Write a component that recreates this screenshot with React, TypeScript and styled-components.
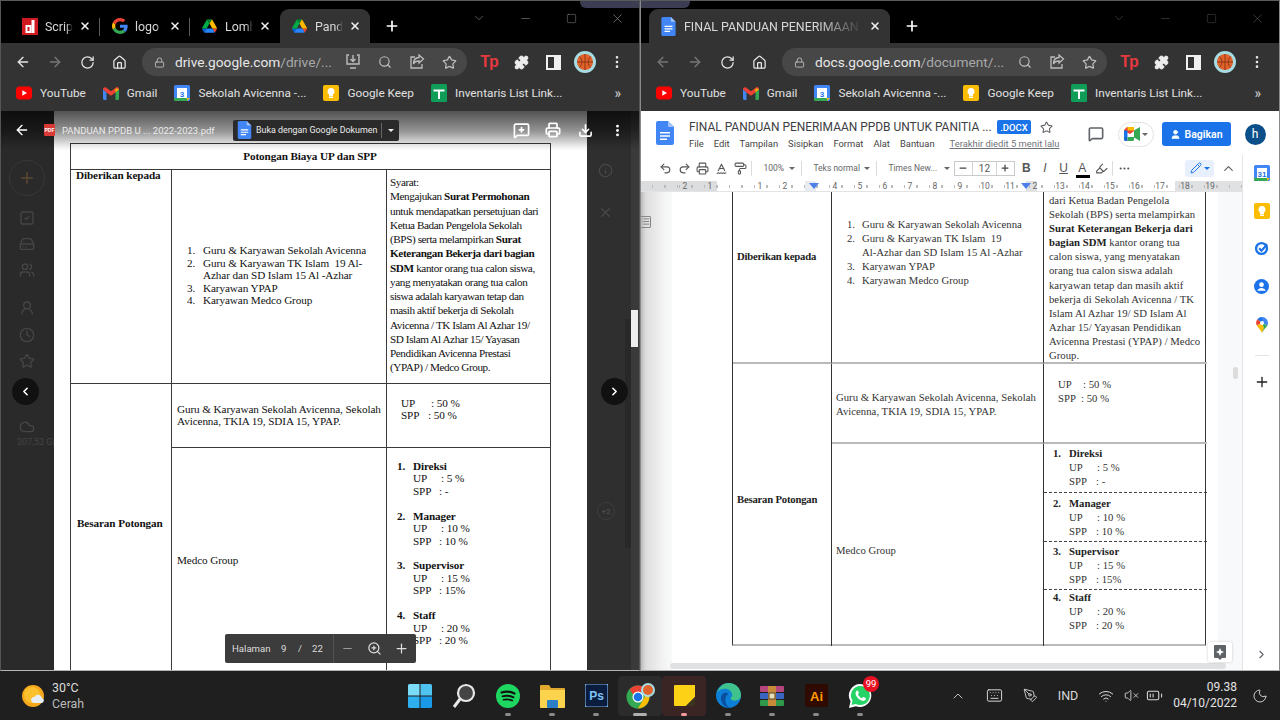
import React from 'react';
import styled, { createGlobalStyle } from 'styled-components';
import {
  ArrowLeft, ArrowRight, RotateCw, Home, Lock, Search, Star, Puzzle, X, Plus, Minus, Square, MoreVertical,
  ChevronDown, ChevronUp, ChevronRight, ChevronLeft, MessageSquarePlus, Printer, Download, Info, Undo2, Redo2,
  SpellCheck2, PaintRoller, Pencil, Highlighter, Ellipsis, MessageSquare, User, Users, Clock,
  Cloud, Keyboard, PenTool, Wifi, VolumeX, BatteryMedium, Moon, List, ZoomIn, HardDrive, UserRound, SquareCheck,
} from 'lucide-react';

const Global = createGlobalStyle`
  html, body { margin: 0; padding: 0; background: #1f1f1f; overflow: hidden; }
  * { box-sizing: border-box; }
`;

const UI = `Roboto, "Noto Sans", sans-serif`;
const SERIF = `"Liberation Serif", "Times New Roman", serif`;

const Desktop = styled.div`
  width: 1280px; height: 720px; display: flex; flex-direction: column; position: relative; overflow: hidden;
  background: #1f1f1f; font-family: ${UI};
`;
const WallpaperPeek = styled.div`
  position: absolute; left: 580px; top: 0; width: 110px; height: 8px; background: #3c3c52; border-radius: 0 0 6px 6px; z-index: 5;
`;
const Windows = styled.div`display: flex; height: 671px;`;
const Win = styled.section<{ $edge: string }>`
  width: 640px; height: 671px; display: flex; flex-direction: column; position: relative; overflow: hidden; background: #333;
  &::after {
    content: ''; position: absolute; inset: 0; pointer-events: none; z-index: 6;
    border: 1px solid ${(p) => p.$edge}; border-bottom-color: #b4b4b4; border-top-color: #5a5a5a;
  }
`;

/* ---------- tab strip ---------- */
const TabStrip = styled.div<{ $pad: number }>`height: 43px; background: #000; display: flex; align-items: flex-end; padding-left: ${(p) => p.$pad}px; position: relative;`;
const Tab = styled.div<{ $w: number; $active?: boolean; $sep?: boolean }>`
  width: ${(p) => p.$w}px; height: 34px; display: flex; align-items: center; padding: 0 9px 0 11px; color: #ddd; position: relative;
  background: ${(p) => (p.$active ? '#333' : 'transparent')}; border-radius: 9px 9px 0 0; flex: none;
  ${(p) => (p.$sep ? `&::after { content: ''; position: absolute; right: 0; top: 9px; height: 18px; width: 1px; background: #5a5a5a; }` : '')}
`;
const TabFav = styled.span`width: 17px; height: 17px; display: flex; align-items: center; justify-content: center; flex: none;`;
const TabTitle = styled.span`
  flex: 1; margin-left: 7px; font-size: 12.4px; color: #d8d8d8; white-space: nowrap; overflow: hidden;
  -webkit-mask-image: linear-gradient(to right, #000 75%, transparent 100%);
`;
const TabClose = styled.span`display: flex; color: #f4f4f4; margin-left: 6px; flex: none;`;
const NewTab = styled.span`display: flex; color: #fff; margin: 13px 0 4px 14px; align-self: center;`;
const Caption = styled.div<{ $dim?: boolean }>`position: absolute; right: 0; top: 6px; display: flex; color: ${(p) => (p.$dim ? '#555' : '#9a9a9a')};`;
const CaptionBtn = styled.span`width: 46px; height: 24px; display: flex; align-items: center; justify-content: center;`;

/* ---------- chrome toolbar ---------- */
const ChromeBar = styled.div`height: 38px; background: #333; display: flex; align-items: center; padding-left: 7px;`;
const Slot = styled.span<{ $dim?: boolean }>`
  width: 32px; height: 32px; display: flex; align-items: center; justify-content: center; flex: none; color: ${(p) => (p.$dim ? '#777' : '#e6e6e6')};
`;
const Omni = styled.div`
  width: 325px; height: 28px; margin: 0 6px 0 7px; background: #474747; border-radius: 14px; display: flex; align-items: center; padding: 0 2px 0 12px; flex: none;
`;
const LockBox = styled.span`display: flex; color: #bbb; width: 21px; flex: none;`;
const Url = styled.div`flex: 1; min-width: 0; font-size: 13.7px; color: #a9a9a9; white-space: nowrap; b { font-weight: 400; color: #e8e8e8; }`;
const OmniIcon = styled(Slot)`color: #bdbdbd;`;
const TpMark = styled.span`font-family: "Liberation Sans", sans-serif; font-weight: 700; font-size: 16px; color: #e5393f; letter-spacing: -1px;`;
const AvatarBall = styled.span`width: 22px; height: 22px; border-radius: 50%; background: #a6dde2; display: flex; align-items: center; justify-content: center;`;

/* ---------- bookmarks ---------- */
const BookBar = styled.div`height: 30px; background: #333; display: flex; align-items: center; padding: 0 0 6px 16px; gap: 17px;`;
const Book = styled.span`display: flex; align-items: center; gap: 8px; font-size: 11.8px; color: #e0e0e0; white-space: nowrap;`;
const BookMore = styled.span`margin-left: auto; margin-right: 19px; color: #d0d0d0; font-size: 14px;`;

/* ---------- pdf viewer ---------- */
const Viewer = styled.div`height: 560px; display: flex; position: relative; overflow: hidden; background: #2b2b2b;`;
const DriveSide = styled.aside`width: 54px; flex: none; background: #2a2a2a; display: flex; flex-direction: column; align-items: center; color: #464646; padding-top: 49px; position: relative; overflow: hidden;`;
const SideCircle = styled.span`width: 36px; height: 36px; border-radius: 50%; border: 1px solid #383838; display: flex; align-items: center; justify-content: center; margin-bottom: 14px;`;
const SideIco = styled.span<{ $mb: number }>`display: flex; height: 16px; margin-bottom: ${(p) => p.$mb}px;`;
const Quota = styled.span`font-size: 9px; color: #444; white-space: nowrap; margin-top: 2px; align-self: flex-start; margin-left: 17px;`;
const Sheet = styled.div`width: 533px; flex: none; background: #fff; padding: 32px 0 0 16px; overflow: hidden;`;
const RightRail = styled.aside`flex: 1; background: #2f2f2f; display: flex; flex-direction: column; align-items: flex-start; padding: 52px 0 0 11px; color: #484848; gap: 27px; position: relative;`;
const RailBadge = styled.span`width: 18px; height: 18px; border-radius: 50%; border: 1px solid #3d3d3d; margin: 255px 0 0 -1px; font-size: 8px; display: flex; align-items: center; justify-content: center; color: #4a4a4a; font-weight: 700;`;
const RailTrack = styled.span`position: absolute; right: 1px; top: 0; bottom: 0; width: 8px; background: #3a3a3a;`;
const RailShade = styled.span`position: absolute; right: 9px; top: 208px; height: 229px; width: 6px; background: #282828;`;
const PdfHead = styled.div`
  position: absolute; left: 0; top: 0; right: 0; height: 40px; display: flex; align-items: center; color: #fff; padding-left: 14px; padding-bottom: 2px;
  background: linear-gradient(to bottom, rgba(0,0,0,.68), rgba(0,0,0,.42) 50%, rgba(0,0,0,.06) 90%, rgba(0,0,0,0));
`;
const PdfBadge = styled.span`
  width: 11px; height: 12px; margin-left: 14px; background: #d93a36; color: #fff; font: 700 5px "Liberation Sans", sans-serif; border-radius: 1px;
  display: flex; align-items: center; justify-content: center; flex: none;
`;
const PdfName = styled.span`margin-left: 7px; width: 171px; font-size: 9.5px; color: #ececec; white-space: nowrap; flex: none;`;
const OpenWith = styled.div`height: 21px; width: 166px; background: #2a2a2a; display: flex; align-items: center; padding-left: 4px; border-radius: 2px; flex: none;`;
const OpenText = styled.span`margin-left: 4px; font-size: 8.9px; color: #eaeaea; white-space: nowrap; width: 125px; flex: none;`;
const OpenSep = styled.span`width: 1px; height: 15px; background: #666; margin-right: 4px; flex: none;`;
const OpenCaret = styled.span`width: 0; height: 0; border: 3.5px solid transparent; border-top-color: #eee; margin: 4px 0 0 2px;`;
const HeadTools = styled.div`margin-left: auto; display: flex; margin-right: 7px;`;
const HeadSlot = styled(Slot)`color: #fff;`;
const NavDot = styled.span<{ $side: 'l' | 'r' }>`
  position: absolute; top: 267px; ${(p) => (p.$side === 'l' ? 'left: 12px;' : 'right: 12px;')}
  width: 27px; height: 27px; border-radius: 50%; background: #111; display: flex; align-items: center; justify-content: center; color: #fff;
`;
const ScrollThumb = styled.span`position: absolute; right: 2px; top: 199px; width: 7px; height: 37px; background: #eee;`;
const ZoomBar = styled.div`
  position: absolute; left: 225px; top: 523px; width: 191px; height: 29px; background: #3c3c3c; border-radius: 2px; display: flex; align-items: center; color: #ddd;
`;
const ZoomText = styled.span`
  font-size: 9.6px; color: #dcdcdc; width: 108px; flex: none; display: flex; padding-left: 7px; white-space: nowrap;
  span:nth-child(1) { width: 49px; } span:nth-child(2) { width: 17px; } span:nth-child(3) { width: 14px; }
`;
const ZoomSep = styled.span`width: 1px; height: 29px; background: #515151; flex: none;`;
const ZoomBtn = styled.span`width: 27px; display: flex; justify-content: center; flex: none;`;

const PdfTable = styled.div`
  width: 481px; height: 530px; display: grid; grid-template-columns: 101px 215px 164px; grid-template-rows: 26px 214px 64px 226px;
  border: 1px solid #3a3a3a; font-family: ${SERIF}; font-size: 11.2px; line-height: 12.4px; color: #111; letter-spacing: -0.1px;
  b { letter-spacing: -0.12px; }
`;
const PdfCell = styled.div<{ $rows?: string; $span?: boolean; $right?: boolean; $bottom?: boolean; $pt?: number; $pl?: number; $center?: boolean; $bold?: boolean; $pb?: number }>`
  border-right: ${(p) => (p.$right ? '1px solid #3a3a3a' : 'none')}; border-bottom: ${(p) => (p.$bottom ? '1px solid #3a3a3a' : 'none')};
  ${(p) => (p.$rows ? `grid-row: ${p.$rows};` : '')} ${(p) => (p.$span ? 'grid-column: 1 / -1;' : '')}
  padding: ${(p) => p.$pt ?? 0}px 0 ${(p) => p.$pb ?? 0}px ${(p) => p.$pl ?? 0}px; font-weight: ${(p) => (p.$bold ? 700 : 400)};
  ${(p) => (p.$bold ? 'line-height: 11px;' : '')}
  ${(p) => (p.$center ? 'display: flex; flex-direction: column; justify-content: center;' : '')}
  white-space: pre; overflow: hidden;
`;
const PdfHeadText = styled.div`text-align: center; font-weight: 700; line-height: 25px; padding-right: 2px;`;
const SyaratLine = styled.div`line-height: 14.25px; letter-spacing: -0.42px; b { letter-spacing: -0.36px; }`;
const Li = styled.div`display: flex;`;
const LiNum = styled.span<{ $w: number }>`width: ${(p) => p.$w}px; flex: none;`;
const Group = styled.div<{ $mb?: number }>`margin-bottom: ${(p) => p.$mb ?? 0}px;`;

/* ---------- docs ---------- */
const DocHeader = styled.header`height: 44px; background: #fff; display: flex; padding-left: 16px;`;
const DocLogo = styled.span`margin: 10px 15px 0 0; display: flex; flex: none;`;
const DocInfo = styled.div`padding-top: 8px; display: flex; flex-direction: column; gap: 2px; width: 372px; flex: none;`;
const TitleRow = styled.div`display: flex; align-items: center; height: 16px;`;
const DocTitle = styled.span`font-size: 11.95px; color: #3c4043; white-space: nowrap; width: 308px; flex: none;`;
const Badge = styled.span`width: 34px; height: 14px; background: #1a73e8; border-radius: 2px; color: #fff; font-size: 9.5px; display: flex; align-items: center; justify-content: center; font-weight: 500; flex: none;`;
const TitleStar = styled.span`margin-left: 9px; color: #5f6368; display: flex;`;
const MenuRow = styled.div`display: flex; gap: 10px; font-size: 9.4px; line-height: 14px; color: #444; white-space: nowrap;`;
const Edited = styled.span`margin-left: 5px; color: #6f7378; text-decoration: underline;`;
const DocActions = styled.div`margin-left: auto; display: flex; align-items: center; padding: 2px 14.5px 0 0; height: 44px;`;
const CommentBtn = styled.span`color: #5f6368; display: flex; margin-right: 14px;`;
const MeetPill = styled.span`width: 36px; height: 25px; border-radius: 13px; border: 1px solid #e3e3e3; display: flex; align-items: center; justify-content: center; gap: 2px; margin-right: 8px; flex: none;`;
const Share = styled.span`width: 69px; height: 24px; background: #1a73e8; border-radius: 3px; color: #fff; display: flex; align-items: center; justify-content: center; gap: 3px; font-size: 10.5px; font-weight: 600; margin-right: 13.5px; flex: none;`;
const ProfileH = styled.span`width: 21px; height: 21px; border-radius: 50%; background: #0b4f8a; color: #fff; font-size: 12px; display: flex; align-items: center; justify-content: center; flex: none;`;

const DocBelow = styled.div`flex: 1; display: flex; min-height: 0; position: relative;`;
const DocMain = styled.div`width: 602px; display: flex; flex-direction: column; flex: none;`;
const DocTools = styled.div`height: 26px; background: #fff; display: flex; align-items: center; padding-left: 16px; color: #5f6368; font-size: 8.5px;`;
const TbSlot = styled.span`width: 18.7px; display: flex; justify-content: center; align-items: center; flex: none; color: #555;`;
const TbSep = styled.span`width: 1px; height: 15px; background: #dadce0; margin: 0 2px; flex: none;`;
const TbSelect = styled.span<{ $w: number }>`width: ${(p) => p.$w}px; padding: 0 4px 0 9px; display: flex; justify-content: space-between; align-items: center; flex: none; white-space: nowrap; color: #666;`;
const Caret = styled.span`width: 0; height: 0; border: 3px solid transparent; border-top-color: #666; margin-top: 3px; flex: none;`;
const SizeBox = styled.span`width: 61px; height: 15px; border: 1px solid #c8cacd; display: flex; align-items: center; flex: none; margin-right: 2px; color: #444;`;
const SizeBtn = styled.span`width: 17px; display: flex; justify-content: center;`;
const SizeVal = styled.span`flex: 1; text-align: center; border: solid #d5d5d5; border-width: 0 1px; line-height: 13px; font-size: 10px; color: #555;`;
const Fmt = styled.span<{ $b?: boolean; $i?: boolean; $u?: boolean; $bar?: boolean }>`
  width: 18.7px; text-align: center; flex: none; font: ${(p) => (p.$i ? 'italic ' : '')}${(p) => (p.$b ? '700' : '400')} 12px "Liberation Sans", sans-serif; color: #555;
  text-decoration: ${(p) => (p.$u ? 'underline' : 'none')}; position: relative;
  ${(p) => (p.$bar ? `&::after { content: ''; position: absolute; left: 3px; right: 2px; bottom: -3px; height: 3px; background: #000; }` : '')}
`;
const PencilPill = styled.span`margin-left: auto; width: 29px; height: 17px; background: #e8f0fe; border-radius: 3px; display: flex; align-items: center; justify-content: center; gap: 2px; color: #1a73e8; flex: none;`;
const BlueCaret = styled(Caret)`border-top-color: #1a73e8;`;
const CollapseBtn = styled.span`width: 28px; display: flex; justify-content: center; color: #5f6368; flex: none;`;
const Ruler = styled.div`
  height: 11px; border-bottom: 1px solid #e3e3e3; display: flex; padding-left: 32.5px; position: relative; font-size: 8.5px; line-height: 10px; color: #666; flex: none;
  background: linear-gradient(to right, #dcdddf 0 77px, #fff 77px 165px, #e8ebf0 165px 176px, #fff 176px 386px, #e0e1e3 386px 397px, #fff 397px 535px, #e0e1e3 535px);
  &::before {
    content: ''; position: absolute; left: 0; right: 0; top: 4px; height: 3px;
    background: repeating-linear-gradient(to right, #bbb 0 1px, transparent 1px 12.5px); background-position: 39px 0;
  }
`;
const RulerNum = styled.span`width: 25px; text-align: center; flex: none; position: relative;`;
const RulerMark = styled.span<{ $x: number }>`position: absolute; left: ${(p) => p.$x}px; top: 2px; width: 0; height: 0; border: 5px solid transparent; border-top: 6px solid #4a80e8; border-bottom: 0;`;
const DocBody = styled.div`flex: 1; display: flex; min-height: 0; position: relative; background: #f8f9fa;`;
const Gutter = styled.div`width: 32px; flex: none; background: linear-gradient(to right, #b5b5b5 0, #dedede 6px, #f4f4f4 24px, #f8f9fa); padding: 19px 0 0 0; color: #666;`;
const OutlineBox = styled.span`display: inline-flex; border: 1px solid #888; border-radius: 1px; width: 11px; height: 12px; align-items: center; justify-content: center;`;
const Page = styled.div`width: 546px; flex: none; background: #fff; padding-left: 60px; overflow: hidden;`;
const DocTable = styled.div`
  width: 474px; height: 454px; display: grid; grid-template-columns: 99px 212px 163px; grid-template-rows: 172px 80px 202px;
  border-left: 1.5px solid #333; border-right: 1.5px solid #333; border-bottom: 2px solid #b9b9b9;
  font-family: ${SERIF}; font-size: 10.7px; line-height: 14.1px; color: #333; letter-spacing: 0.03px;
`;
const DocCell = styled.div<{ $rows?: string; $right?: boolean; $bottom?: boolean; $pt?: number; $pl?: number; $bold?: boolean }>`
  ${(p) => (p.$rows ? `grid-row: ${p.$rows};` : '')}
  border-right: ${(p) => (p.$right ? '1.5px solid #333' : 'none')}; border-bottom: ${(p) => (p.$bottom ? '2px solid #b9b9b9' : 'none')};
  padding: ${(p) => p.$pt ?? 0}px 0 0 ${(p) => p.$pl ?? 0}px; white-space: pre; overflow: hidden;
  ${(p) => (p.$bold ? 'font-weight: 700; letter-spacing: -0.2px; color: #222;' : '')}
`;
const Sub = styled.div<{ $h: number; $pt: number; $dash?: boolean }>`
  height: ${(p) => p.$h}px; padding: ${(p) => p.$pt}px 0 0 9px; border-bottom: ${(p) => (p.$dash ? '1px dashed #444' : 'none')};
`;
const Strong = styled.b`color: #222;`;
const VThumb = styled.span`position: absolute; right: 4px; top: 175px; width: 5px; height: 12px; background: #dcdcdc; border-radius: 3px;`;
const HScroll = styled.span`position: absolute; left: 30px; right: 16px; bottom: 2px; height: 6px; background: #dfe1e3; border-radius: 3px;`;
const Explore = styled.span`position: absolute; right: 10px; bottom: 9px; width: 24px; height: 20px; background: #fff; border-radius: 2px; box-shadow: 0 0 3px rgba(0,0,0,.2); display: flex; align-items: center; justify-content: center;`;
const SidePanel = styled.aside`width: 38px; flex: none; background: #fff; border-left: 1px solid #e3e5e8; display: flex; flex-direction: column; align-items: center; padding-top: 10px; position: relative;`;
const SideApp = styled.span`height: 38px; display: flex; justify-content: center;`;
const SideRule = styled.span`width: 14px; height: 1px; background: #e3e3e3; margin: 0 0 18px;`;
const SideChevron = styled.span`position: absolute; bottom: 10px; color: #5f6368; display: flex;`;

/* ---------- taskbar ---------- */
const Taskbar = styled.footer`height: 49px; display: flex; align-items: center; background: #1f1f1f; color: #e6e6e6;`;
const Weather = styled.div`width: 398px; flex: none; padding-left: 22px; display: flex; align-items: center;`;
const WeatherText = styled.div`margin-left: 6px; font-size: 12.4px; line-height: 16px; color: #ddd;`;
const WeatherSub = styled.div`color: #b9b9b9;`;
const TaskIcon = styled.span<{ $bg?: string; $dot?: string; $wide?: boolean }>`
  width: 44px; height: 40px; flex: none; display: flex; align-items: center; justify-content: center; position: relative; border-radius: 4px;
  background: ${(p) => p.$bg ?? 'transparent'};
  ${(p) => (p.$dot ? `&::after { content: ''; position: absolute; bottom: 0; left: 50%; transform: translateX(-50%); height: 3px; border-radius: 2px; width: ${p.$wide ? 14 : 6}px; background: ${p.$dot}; }` : '')}
`;
const WaBadge = styled.span`position: absolute; left: 25px; top: 0; width: 16px; height: 16px; background: #e81123; color: #fff; border-radius: 50%; font-size: 9.5px; display: flex; align-items: center; justify-content: center;`;
const Tray = styled.div`margin-left: 58px; display: flex; align-items: center; color: #d8d8d8;`;
const TraySlot = styled.span<{ $w: number }>`width: ${(p) => p.$w}px; display: flex; justify-content: center; align-items: center; flex: none; font-size: 12.5px; svg { flex: none; }`;
const Clock2 = styled.div`width: 67px; text-align: right; font-size: 12px; line-height: 15.5px; color: #e4e4e4; flex: none;`;

/* ---------- drawn icons ---------- */
const ScriptIco = () => (
  <svg width="16" height="17" viewBox="0 0 16 17"><rect width="16" height="17" fill="#d11a1f" /><rect x="9.5" y="2" width="3" height="13" fill="#fff" /><rect x="3.5" y="7" width="6" height="8" fill="#fff" /><rect x="5.5" y="9" width="2" height="4" fill="#d11a1f" /></svg>
);
const GoogleIco = () => (
  <svg width="16" height="16" viewBox="0 0 48 48">
    <path fill="#EA4335" d="M24 9.5c3.54 0 6.71 1.22 9.21 3.6l6.85-6.85C35.9 2.38 30.47 0 24 0 14.62 0 6.51 5.38 2.56 13.22l7.98 6.19C12.43 13.72 17.74 9.5 24 9.5z" />
    <path fill="#4285F4" d="M46.98 24.55c0-1.57-.15-3.09-.38-4.55H24v9.02h12.94c-.58 2.96-2.26 5.48-4.78 7.18l7.73 6c4.51-4.18 7.09-10.36 7.09-17.65z" />
    <path fill="#FBBC05" d="M10.53 28.59c-.48-1.45-.76-2.99-.76-4.59s.27-3.14.76-4.59l-7.98-6.19C.92 16.46 0 20.12 0 24c0 3.88.92 7.54 2.56 10.78l7.97-6.19z" />
    <path fill="#34A853" d="M24 48c6.48 0 11.93-2.13 15.89-5.81l-7.73-6c-2.15 1.45-4.92 2.3-8.16 2.3-6.26 0-11.57-4.22-13.47-9.91l-7.98 6.19C6.51 42.62 14.62 48 24 48z" />
  </svg>
);
const DriveIco = () => (
  <svg width="15" height="14" viewBox="0 0 87.3 78">
    <path d="m6.6 66.85 3.85 6.65c.8 1.4 1.95 2.5 3.3 3.3l13.75-23.8h-27.5c0 1.55.4 3.1 1.2 4.5z" fill="#0066da" />
    <path d="m43.65 25-13.75-23.8c-1.35.8-2.5 1.9-3.3 3.3l-25.4 44a9.06 9.06 0 0 0 -1.2 4.5h27.5z" fill="#00ac47" />
    <path d="m73.55 76.8c1.35-.8 2.5-1.9 3.3-3.3l1.6-2.75 7.65-13.25c.8-1.4 1.2-2.95 1.2-4.5h-27.502l5.852 11.5z" fill="#ea4335" />
    <path d="m43.65 25 13.75-23.8c-1.35-.8-2.9-1.2-4.5-1.2h-18.5c-1.6 0-3.15.45-4.5 1.2z" fill="#00832d" />
    <path d="m59.8 53h-32.3l-13.75 23.8c1.35.8 2.9 1.2 4.5 1.2h50.8c1.6 0 3.15-.45 4.5-1.2z" fill="#2684fc" />
    <path d="m73.4 26.5-12.7-22c-.8-1.4-1.95-2.5-3.3-3.3l-13.75 23.8 16.15 28h27.45c0-1.55-.4-3.1-1.2-4.5z" fill="#ffba00" />
  </svg>
);
const DocIco = ({ w = 15, h = 19 }: { w?: number; h?: number }) => (
  <svg width={w} height={h} viewBox="0 0 18 24">
    <path d="M2 0h10l6 6v16a2 2 0 0 1-2 2H2a2 2 0 0 1-2-2V2a2 2 0 0 1 2-2z" fill="#4285f4" />
    <path d="M12 0l6 6h-5a1 1 0 0 1-1-1z" fill="#a1c2fa" />
    <path d="M4 11h10v1.6H4zM4 14.2h10v1.6H4zM4 17.4h7V19H4z" fill="#fff" />
  </svg>
);
const YtIco = () => (
  <svg width="16" height="16" viewBox="0 0 16 16"><rect y="1.5" width="16" height="13" rx="3.5" fill="#f00" /><path d="M6.3 5.2 11 8l-4.700 2.800z" fill="#fff" /></svg>
);
const GmailIco = () => (
  <svg width="16" height="13" viewBox="0 0 16 13">
    <path d="M0 2v9.500c0 .8.700 1.500 1.500 1.500H3.500V5.500z" fill="#4285f4" />
    <path d="M12.500 5.500V13h2c.8 0 1.500-.7 1.500-1.500V2z" fill="#34a853" />
    <path d="M0 2c0-1.500 1.800-2.400 3-1.500L8 4.300l5-3.800c1.200-.9 3-.1 3 1.500l-3.500 3.500L8 8.800 3.500 5.500z" fill="#ea4335" />
    <path d="M12.500 1.500 16 2l-3.500 3.500z" fill="#fbbc05" />
  </svg>
);
const CalIco = ({ n = '3', size = 16 }: { n?: string; size?: number }) => (
  <svg width={size} height={size} viewBox="0 0 16 16">
    <rect width="16" height="16" rx="1.500" fill="#4285f4" /><rect x="3" y="3" width="10" height="10" fill="#fff" />
    <path d="M0 13h13v3H1.500A1.500 1.500 0 0 1 0 14.500z" fill="#34a853" /><path d="M13 13h3l-3 3z" fill="#fbbc04" /><path d="M13 3h3v10h-3z" fill="#4285f4" />
    <text x="8" y="11.500" fontSize="8" textAnchor="middle" fontFamily="Liberation Sans" fill="#1a73e8" fontWeight="700">{n}</text>
  </svg>
);
const KeepIco = ({ size = 16 }: { size?: number }) => (
  <svg width={size} height={size} viewBox="0 0 16 16"><rect width="16" height="16" rx="2" fill="#fbbc04" /><path d="M8 3a3.500 3.500 0 0 0-2 6.400V11h4V9.400A3.500 3.500 0 0 0 8 3z" fill="#fff" /><rect x="6" y="11.500" width="4" height="1.500" fill="#fff" /></svg>
);
const SheetIco = () => (
  <svg width="16" height="18" viewBox="0 0 16 18"><rect width="16" height="18" rx="1.500" fill="#0f9d58" /><path d="M2.500 5.500h11v2h-4.500V15H7V7.500H2.500z" fill="#fff" /></svg>
);
const Ball = ({ size = 16 }: { size?: number }) => (
  <svg width={size} height={size} viewBox="0 0 16 16"><circle cx="8" cy="8" r="8" fill="#e2622b" /><path d="M0 8h16M8 0v16M2.500 2.500c3 3 3 8 0 11M13.500 2.500c-3 3-3 8 0 11" stroke="#7a2e10" strokeWidth=".8" fill="none" /></svg>
);
const ChromeShare = () => (
  <svg width="16" height="16" viewBox="0 0 16 16" fill="none" stroke="currentColor" strokeWidth="1.300"><path d="M6 3H2v11h11v-4" /><path d="M14.500 5 10 1v2.500C6.500 3.500 4.500 6 4.500 10c1-2.500 3-3 5.500-3v2z" /></svg>
);
const SidePanelIco = () => (
  <svg width="15" height="15" viewBox="0 0 15 15"><rect x="1" y="1" width="13" height="13" fill="none" stroke="#f0f0f0" strokeWidth="2" /><rect x="8" y="1" width="6" height="13" fill="#f0f0f0" /></svg>
);
const OmniDownload = () => (
  <svg width="16" height="16" viewBox="0 0 16 16" fill="none" stroke="currentColor" strokeWidth="1.400"><path d="M4 1H2v9h12V1h-2M8 1v6M5.500 5 8 7.500 10.500 5M5 14h6" /></svg>
);
const MeetIco = () => (
  <svg width="16" height="14" viewBox="0 0 16 14">
    <path d="M3 0h7v4L6 7 0 4V3z" fill="#ea4335" /><path d="M0 3.500h3.500V10H0z" fill="#1a73e8" /><path d="M0 10h3.500v4H1.500A1.500 1.500 0 0 1 0 12.500z" fill="#1967d2" />
    <path d="M3.500 10H10v2.500c0 .8-.7 1.500-1.500 1.500h-5z" fill="#34a853" /><path d="M3.500 0H10v3.500H3.500z" fill="#fbbc04" /><path d="M10 3.500 16 0v14l-6-3.500z" fill="#34a853" />
  </svg>
);
const TasksIco = () => (
  <svg width="15" height="15" viewBox="0 0 16 16" fill="none"><circle cx="8" cy="8" r="5.800" stroke="#1a73e8" strokeWidth="2.500" /><path d="M5.500 7.800 8 10.300 14 3.500" stroke="#1a73e8" strokeWidth="2.200" /></svg>
);
const ContactsIco = () => (
  <svg width="15" height="15" viewBox="0 0 16 16"><circle cx="8" cy="8" r="8" fill="#1a73e8" /><circle cx="8" cy="6" r="2.500" fill="#fff" /><path d="M3.500 12.500c.8-2 2.500-3 4.500-3s3.700 1 4.500 3z" fill="#fff" /></svg>
);
const MapsIco = () => (
  <svg width="12" height="16" viewBox="0 0 12 16">
    <path d="M6 0a6 6 0 0 0-4.600 2.200L6 6z" fill="#1a73e8" /><path d="M6 0a6 6 0 0 1 5.400 8.500L6 6z" fill="#4285f4" /><path d="M1.400 2.200A6 6 0 0 0 .8 8.500L6 6z" fill="#ea4335" />
    <path d="M.8 8.500C2 11 5 13 6 16l2-5-2-5z" fill="#fbbc04" /><path d="M11.400 8.500 6 6l2 5c-1 2-1.500 3-2 5 1-3 4-5 5.400-7.500z" fill="#34a853" /><circle cx="6" cy="6" r="2" fill="#fff" />
  </svg>
);
const WeatherIco = () => (
  <svg width="24" height="26" viewBox="0 0 24 26"><circle cx="11" cy="13" r="11" fill="#f6a81c" /><circle cx="10" cy="12" r="8" fill="#fbc02d" /><path d="M12 20a3 3 0 0 1 .5-6 4 4 0 0 1 7.500 1 2.600 2.600 0 0 1 0 5z" fill="#e8eef5" /></svg>
);
const Win11 = () => (
  <svg width="24" height="24" viewBox="0 0 24 24">
    <path d="M1.500 0h10v11.500H0V1.500A1.500 1.500 0 0 1 1.500 0z" fill="#7bdcf7" /><path d="M12.500 0h10A1.500 1.500 0 0 1 24 1.500v10H12.500z" fill="#4fc3f0" />
    <path d="M0 12.500h11.500V24h-10A1.500 1.500 0 0 1 0 22.500z" fill="#2fb0ee" /><path d="M12.500 12.500H24v10a1.500 1.500 0 0 1-1.500 1.500h-10z" fill="#1a9ae6" />
  </svg>
);
const SearchIco = () => (
  <svg width="24" height="26" viewBox="0 0 24 26" fill="none"><circle cx="14" cy="10" r="8" fill="#444" stroke="#e8e8e8" strokeWidth="2.200" /><path d="M8 16 2 24" stroke="#e8e8e8" strokeWidth="3" /></svg>
);
const SpotifyIco = () => (
  <svg width="24" height="24" viewBox="0 0 24 24" fill="none"><circle cx="12" cy="12" r="12" fill="#1ed760" /><g stroke="#111" strokeLinecap="round"><path d="M5.500 8.500c4-1.200 9-1 13 1" strokeWidth="2.200" /><path d="M6.500 12.300c3.500-1 7.500-.7 11 1" strokeWidth="1.900" /><path d="M7.500 15.800c3-.8 6-.5 8.800.8" strokeWidth="1.600" /></g></svg>
);
const FolderIco = () => (
  <svg width="25" height="24" viewBox="0 0 25 24"><path d="M0 2a1 1 0 0 1 1-1h8l2 3h13a1 1 0 0 1 1 1v3H0z" fill="#e0a82e" /><path d="M0 6h25v17a1 1 0 0 1-1 1H1a1 1 0 0 1-1-1z" fill="#fcd34d" /><rect x="7" y="16" width="11" height="8" rx="1" fill="#2b7fc7" /></svg>
);
const PsIco = () => (
  <svg width="23" height="23" viewBox="0 0 23 23"><rect width="23" height="23" rx="2" fill="#0b1d3e" stroke="#7fb4ea" strokeWidth="1.200" /><text x="11.500" y="16" textAnchor="middle" fontSize="12" fontWeight="700" fontFamily="Liberation Sans" fill="#7fc3f8">Ps</text></svg>
);
const ChromeIco = () => (
  <svg width="30" height="28" viewBox="0 0 30 28">
    <circle cx="13" cy="15" r="11.500" fill="#34a853" /><path d="M13 3.500A11.500 11.500 0 0 1 23.300 10H13a5.500 5.500 0 0 0-4.800 2.700L4.500 7.300A11.500 11.500 0 0 1 13 3.500z" fill="#ea4335" />
    <path d="M23.300 10A11.500 11.500 0 0 1 13 26.500l5-8.700a5.500 5.500 0 0 0 0-7.800z" fill="#fbbc04" /><circle cx="13" cy="15" r="5.500" fill="#fff" /><circle cx="13" cy="15" r="4.300" fill="#1a73e8" />
    <circle cx="23" cy="8" r="7" fill="#a6dde2" /><circle cx="23" cy="8" r="5" fill="#e2622b" />
  </svg>
);
const StickyIco = () => (
  <svg width="21" height="21" viewBox="0 0 21 21"><path d="M1 0h20v12l-9 9H1a1 1 0 0 1-1-1V1a1 1 0 0 1 1-1z" fill="#fcd116" /><path d="M21 12v8a1 1 0 0 1-1 1h-8z" fill="#3b3420" /></svg>
);
const EdgeIco = () => (
  <svg width="25" height="25" viewBox="0 0 24 24">
    <circle cx="12" cy="12" r="12" fill="#0d7fd6" /><path d="M1 9C3 3 8 0 12 0c7 0 12 5 12 12 0 3-3 5-6 5-2.500 0-4-1-4-2.500 0-1 1.500-1 1.500-3C15.500 8 12 5.500 9 5.500 5 5.500 2 7 1 9z" fill="#3fc28c" />
    <path d="M10 9c-4 0-6 4-5 8s5 7 9 7c-3-1-5-4-5-7.500 0-3 1-5 3-6z" fill="#0a4f9e" />
  </svg>
);
const RarIco = () => (
  <svg width="24" height="20" viewBox="0 0 24 20">
    <rect y="0" width="24" height="6" rx="1" fill="#b5467e" /><rect y="7" width="24" height="6" rx="1" fill="#3a66c2" /><rect y="14" width="24" height="6" rx="1" fill="#2f9a4a" />
    <rect x="8" y="0" width="8" height="20" fill="#c78a3a" /><rect x="9" y="7" width="6" height="6" fill="#e9dcb8" stroke="#5a4320" />
  </svg>
);
const AiIco = () => (
  <svg width="23" height="23" viewBox="0 0 23 23"><rect width="23" height="23" rx="2" fill="#2e0a00" /><text x="11.500" y="16.500" textAnchor="middle" fontSize="13" fontWeight="700" fontFamily="Liberation Sans" fill="#ff9a00">Ai</text></svg>
);
const WaIco = () => (
  <svg width="25" height="26" viewBox="0 0 25 26">
    <path d="M12.500 1a11.500 11.500 0 0 0-10 17.300L1 25l6.900-1.700A11.500 11.500 0 1 0 12.500 1z" fill="#fff" />
    <path d="M12.500 3a9.500 9.500 0 0 0-8 14.700l-1 4.300 4.400-1.100A9.500 9.500 0 1 0 12.500 3z" fill="#25d366" />
    <path d="M9 7.500c-1.500 1-2 3-.8 5.300 1.300 2.500 3.500 4.500 6 5 2 .4 3.500-.6 3.800-2 .1-.5-2.500-2-3-1.700-.6.400-1 1.200-1.500 1-1.300-.5-3-2.300-3.500-3.500-.2-.5.800-1 .9-1.600.1-.5-1-3-1.900-2.500z" fill="#fff" />
  </svg>
);

/* ---------- data ---------- */
const bookmarks: [React.ReactNode, string][] = [
  [<YtIco />, 'YouTube'], [<GmailIco />, 'Gmail'], [<CalIco />, 'Sekolah Avicenna -...'], [<KeepIco />, 'Google Keep'], [<SheetIco />, 'Inventaris List Link...'],
];
const pdfSyarat: React.ReactNode[] = [
  'Syarat:',
  <>Mengajukan <b>Surat Permohonan</b></>,
  'untuk mendapatkan persetujuan dari',
  'Ketua Badan Pengelola Sekolah',
  <>(BPS) serta melampirkan <b>Surat</b></>,
  <b>Keterangan Bekerja dari bagian</b>,
  <><b>SDM</b> kantor orang tua calon siswa,</>,
  'yang menyatakan orang tua calon',
  'siswa adalah karyawan tetap dan',
  'masih aktif bekerja di Sekolah',
  'Avicenna / TK Islam Al Azhar 19/',
  'SD Islam Al Azhar 15/ Yayasan',
  'Pendidikan Avicenna Prestasi',
  '(YPAP) / Medco Group.',
];
const docSyarat: React.ReactNode[] = [
  'dari Ketua Badan Pengelola',
  'Sekolah (BPS) serta melampirkan',
  <Strong>Surat Keterangan Bekerja dari</Strong>,
  <><Strong>bagian SDM</Strong> kantor orang tua</>,
  'calon siswa, yang menyatakan',
  'orang tua calon siswa adalah',
  'karyawan tetap dan masih aktif',
  'bekerja di Sekolah Avicenna / TK',
  'Islam Al Azhar 19/ SD Islam Al',
  'Azhar 15/ Yayasan Pendidikan',
  'Avicenna Prestasi (YPAP) / Medco',
  'Group.',
];
const levels = [
  { n: '1.', t: 'Direksi', up: ': 5 %', spp: ': -' },
  { n: '2.', t: 'Manager', up: ': 10 %', spp: ': 10 %' },
  { n: '3.', t: 'Supervisor', up: ': 15 %', spp: ': 15%' },
  { n: '4.', t: 'Staff', up: ': 20 %', spp: ': 20 %' },
];
const subs = [
  { h: 49, pt: 2, dash: true }, { h: 49, pt: 3, dash: true }, { h: 48, pt: 2, dash: true }, { h: 54, pt: 0, dash: false },
];
const rulerNums = ['2', '1', '', '1', '2', '', '4', '5', '6', '7', '8', '9', '10', '11', '2', '13', '14', '15', '16', '17', '18', '19'];

const ChromeChrome = ({ url, path, backDim, hasDownload }: { url: string; path: string; backDim?: boolean; hasDownload?: boolean }) => (
  <>
    <ChromeBar>
      <Slot $dim={backDim}><ArrowLeft size={16} /></Slot>
      <Slot $dim><ArrowRight size={16} /></Slot>
      <Slot><RotateCw size={15} /></Slot>
      <Slot><Home size={15} /></Slot>
      <Omni>
        <LockBox><Lock size={11} /></LockBox>
        <Url><b>{url}</b>{path}</Url>
        {hasDownload && <OmniIcon><OmniDownload /></OmniIcon>}
        <OmniIcon><Search size={14} /></OmniIcon>
        <OmniIcon><ChromeShare /></OmniIcon>
        <OmniIcon><Star size={15} /></OmniIcon>
      </Omni>
      <Slot><TpMark>Tp</TpMark></Slot>
      <Slot><Puzzle size={15} fill="#eee" /></Slot>
      <Slot><SidePanelIco /></Slot>
      <Slot><AvatarBall><Ball /></AvatarBall></Slot>
      <Slot><MoreVertical size={16} /></Slot>
    </ChromeBar>
    <BookBar>
      {bookmarks.map(([ico, label]) => <Book key={label}>{ico}{label}</Book>)}
      <BookMore>»</BookMore>
    </BookBar>
  </>
);

const Captions = ({ dim }: { dim?: boolean }) => (
  <Caption $dim={dim}>
    <CaptionBtn><ChevronDown size={14} strokeWidth={1} /></CaptionBtn>
    <CaptionBtn><Minus size={13} strokeWidth={1} /></CaptionBtn>
    <CaptionBtn><Square size={11} strokeWidth={1} /></CaptionBtn>
    <CaptionBtn><X size={15} strokeWidth={1} /></CaptionBtn>
  </Caption>
);

export default function App() {
  return (
    <Desktop>
      <Global />
      <WallpaperPeek />
      <Windows>
        <Win $edge="#555">
          <TabStrip $pad={10}>
            <Tab $w={90} $sep><TabFav><ScriptIco /></TabFav><TabTitle>Script</TabTitle><TabClose><X size={12} strokeWidth={3} /></TabClose></Tab>
            <Tab $w={90} $sep><TabFav><GoogleIco /></TabFav><TabTitle>logo d</TabTitle><TabClose><X size={12} strokeWidth={3} /></TabClose></Tab>
            <Tab $w={90}><TabFav><DriveIco /></TabFav><TabTitle>Lomba</TabTitle><TabClose><X size={12} strokeWidth={3} /></TabClose></Tab>
            <Tab $w={90} $active><TabFav><DriveIco /></TabFav><TabTitle>Pandu</TabTitle><TabClose><X size={12} strokeWidth={3} /></TabClose></Tab>
            <NewTab><Plus size={16} strokeWidth={2.5} /></NewTab>
            <Captions />
          </TabStrip>
          <ChromeChrome url="drive.google.com" path="/drive/..." hasDownload />
          <Viewer>
            <DriveSide>
              <SideCircle><Plus size={18} color="#5a4a30" /></SideCircle>
              <SideIco $mb={10}><SquareCheck size={16} /></SideIco>
              <SideIco $mb={10}><HardDrive size={16} /></SideIco>
              <SideIco $mb={22}><Users size={16} /></SideIco>
              <SideIco $mb={11}><UserRound size={16} /></SideIco>
              <SideIco $mb={10}><Clock size={16} /></SideIco>
              <SideIco $mb={50}><Star size={16} /></SideIco>
              <SideIco $mb={0}><Cloud size={16} /></SideIco>
              <Quota>207,53 GB</Quota>
            </DriveSide>
            <Sheet>
              <PdfTable>
                <PdfCell $span $bottom><PdfHeadText>Potongan Biaya UP dan SPP</PdfHeadText></PdfCell>
                <PdfCell $right $bottom $bold $pl={5} $pt={0}>Diberikan kepada</PdfCell>
                <PdfCell $right $bottom $center $pl={15} $pb={2}>
                  <Li><LiNum $w={16}>1.</LiNum>Guru &amp; Karyawan Sekolah Avicenna</Li>
                  <Li><LiNum $w={16}>2.</LiNum><span>Guru &amp; Karyawan TK Islam  19 Al-{'\n'}Azhar dan SD Islam 15 Al -Azhar</span></Li>
                  <Li><LiNum $w={16}>3.</LiNum>Karyawan YPAP</Li>
                  <Li><LiNum $w={16}>4.</LiNum>Karyawan Medco Group</Li>
                </PdfCell>
                <PdfCell $bottom $pl={3} $pt={5}>
                  {pdfSyarat.map((l, i) => <SyaratLine key={i}>{l}</SyaratLine>)}
                </PdfCell>
                <PdfCell $rows="3 / 5" $right $center $bold $pl={6} $pb={12}>Besaran Potongan</PdfCell>
                <PdfCell $right $bottom $center $pl={5} $pb={1}>{'Guru & Karyawan Sekolah Avicenna, Sekolah\nAvicenna, TKIA 19, SDIA 15, YPAP.'}</PdfCell>
                <PdfCell $bottom $pl={14} $pt={13}>
                  <Li><LiNum $w={30}>UP</LiNum>: 50 %</Li>
                  <Li><LiNum $w={27}>SPP</LiNum>: 50 %</Li>
                </PdfCell>
                <PdfCell $right $center $pl={5} $pb={2}>Medco Group</PdfCell>
                <PdfCell $pl={10} $pt={12}>
                  {levels.map((g) => (
                    <Group key={g.n} $mb={12.5}>
                      <Li><LiNum $w={16}><b>{g.n}</b></LiNum><b>{g.t}</b></Li>
                      <Li><LiNum $w={16} /><LiNum $w={28}>UP</LiNum>{g.up}</Li>
                      <Li><LiNum $w={16} /><LiNum $w={26}>SPP</LiNum>{g.spp}</Li>
                    </Group>
                  ))}
                </PdfCell>
              </PdfTable>
            </Sheet>
            <RightRail>
              <Info size={15} />
              <X size={15} />
              <RailBadge>+2</RailBadge>
              <RailShade />
              <RailTrack />
            </RightRail>
            <PdfHead>
              <ArrowLeft size={16} />
              <PdfBadge>PDF</PdfBadge>
              <PdfName>PANDUAN PPDB U ... 2022-2023.pdf</PdfName>
              <OpenWith>
                <DocIco w={15} h={18} />
                <OpenText>Buka dengan Google Dokumen</OpenText>
                <OpenSep />
                <OpenCaret />
              </OpenWith>
              <HeadTools>
                <HeadSlot><MessageSquarePlus size={17} strokeWidth={2.4} /></HeadSlot>
                <HeadSlot><Printer size={16} strokeWidth={2.6} /></HeadSlot>
                <HeadSlot><Download size={15} strokeWidth={2.6} /></HeadSlot>
                <HeadSlot><MoreVertical size={15} strokeWidth={2.6} /></HeadSlot>
              </HeadTools>
            </PdfHead>
            <NavDot $side="l"><ChevronLeft size={13} strokeWidth={3} /></NavDot>
            <NavDot $side="r"><ChevronRight size={13} strokeWidth={3} /></NavDot>
            <ScrollThumb />
            <ZoomBar>
              <ZoomText><span>Halaman</span><span>9</span><span>/</span><span>22</span></ZoomText>
              <ZoomSep />
              <ZoomBtn><Minus size={13} color="#999" /></ZoomBtn>
              <ZoomBtn><ZoomIn size={15} /></ZoomBtn>
              <ZoomBtn><Plus size={15} /></ZoomBtn>
            </ZoomBar>
          </Viewer>
        </Win>

        <Win $edge="#8a8a8a">
          <TabStrip $pad={9}>
            <Tab $w={241} $active>
              <TabFav><DocIco w={15} h={19} /></TabFav>
              <TabTitle>FINAL PANDUAN PENERIMAAN PPDB</TabTitle>
              <TabClose><X size={12} strokeWidth={3} /></TabClose>
            </Tab>
            <NewTab><Plus size={16} strokeWidth={2.5} /></NewTab>
            <Captions dim />
          </TabStrip>
          <ChromeChrome url="docs.google.com" path="/document/..." backDim />
          <DocHeader>
            <DocLogo><DocIco w={18} h={24} /></DocLogo>
            <DocInfo>
              <TitleRow>
                <DocTitle>FINAL PANDUAN PENERIMAAN PPDB UNTUK PANITIA ...</DocTitle>
                <Badge>.DOCX</Badge>
                <TitleStar><Star size={13} /></TitleStar>
              </TitleRow>
              <MenuRow>
                <span>File</span><span>Edit</span><span>Tampilan</span><span>Sisipkan</span><span>Format</span><span>Alat</span><span>Bantuan</span>
                <Edited>Terakhir diedit 5 menit lalu</Edited>
              </MenuRow>
            </DocInfo>
            <DocActions>
              <CommentBtn><MessageSquare size={16} strokeWidth={2.4} /></CommentBtn>
              <MeetPill><MeetIco /><Caret /></MeetPill>
              <Share><User size={11} fill="#fff" />Bagikan</Share>
              <ProfileH>h</ProfileH>
            </DocActions>
          </DocHeader>
          <DocBelow>
            <DocMain>
              <DocTools>
                <TbSlot><Undo2 size={13} /></TbSlot>
                <TbSlot><Redo2 size={13} /></TbSlot>
                <TbSlot><Printer size={13} /></TbSlot>
                <TbSlot><SpellCheck2 size={13} /></TbSlot>
                <TbSlot><PaintRoller size={13} /></TbSlot>
                <TbSep />
                <TbSelect $w={45}>100%<Caret /></TbSelect>
                <TbSep />
                <TbSelect $w={70}>Teks normal<Caret /></TbSelect>
                <TbSep />
                <TbSelect $w={74.5}>Times New...<Caret /></TbSelect>
                <SizeBox>
                  <SizeBtn><Minus size={10} strokeWidth={3} /></SizeBtn>
                  <SizeVal>12</SizeVal>
                  <SizeBtn><Plus size={10} strokeWidth={3} /></SizeBtn>
                </SizeBox>
                <Fmt $b>B</Fmt>
                <Fmt $i>I</Fmt>
                <Fmt $u>U</Fmt>
                <Fmt $bar>A</Fmt>
                <TbSlot><Highlighter size={13} /></TbSlot>
                <TbSep />
                <TbSlot><Ellipsis size={13} /></TbSlot>
                <PencilPill><Pencil size={12} /><BlueCaret /></PencilPill>
                <CollapseBtn><ChevronUp size={15} /></CollapseBtn>
              </DocTools>
              <Ruler>
                {rulerNums.map((n, i) => <RulerNum key={i}>{n}</RulerNum>)}
                <RulerMark $x={169} />
                <RulerMark $x={381} />
              </Ruler>
              <DocBody>
                <Gutter><OutlineBox><List size={9} /></OutlineBox></Gutter>
                <Page>
                  <DocTable>
                    <DocCell $right $bottom $bold $pl={4} $pt={57}>Diberikan kepada</DocCell>
                    <DocCell $right $bottom $pl={15} $pt={25}>
                      <Li><LiNum $w={15}>1.</LiNum>Guru &amp; Karyawan Sekolah Avicenna</Li>
                      <Li><LiNum $w={15}>2.</LiNum><span>Guru &amp; Karyawan TK Islam  19{'\n'}Al-Azhar dan SD Islam 15 Al -Azhar</span></Li>
                      <Li><LiNum $w={15}>3.</LiNum>Karyawan YPAP</Li>
                      <Li><LiNum $w={15}>4.</LiNum>Karyawan Medco Group</Li>
                    </DocCell>
                    <DocCell $bottom $pl={5} $pt={1}>
                      {docSyarat.map((l, i) => <div key={i}>{l}</div>)}
                    </DocCell>
                    <DocCell $rows="2 / 4" $right $bold $pl={4} $pt={128}>Besaran Potongan</DocCell>
                    <DocCell $right $bottom $pl={4} $pt={26}>{'Guru & Karyawan Sekolah Avicenna, Sekolah\nAvicenna, TKIA 19, SDIA 15, YPAP.'}</DocCell>
                    <DocCell $bottom $pl={14} $pt={13}>
                      <Li><LiNum $w={25}>UP</LiNum>: 50 %</Li>
                      <Li><LiNum $w={23}>SPP</LiNum>: 50 %</Li>
                    </DocCell>
                    <DocCell $right $pl={4} $pt={99}>Medco Group</DocCell>
                    <DocCell>
                      {levels.map((g, i) => (
                        <Sub key={g.n} $h={subs[i].h} $pt={subs[i].pt} $dash={subs[i].dash}>
                          <Li><LiNum $w={16}><Strong>{g.n}</Strong></LiNum><Strong>{g.t}</Strong></Li>
                          <Li><LiNum $w={16} /><LiNum $w={28}>UP</LiNum>{g.up}</Li>
                          <Li><LiNum $w={16} /><LiNum $w={27}>SPP</LiNum>{g.spp}</Li>
                        </Sub>
                      ))}
                    </DocCell>
                  </DocTable>
                </Page>
                <VThumb />
                <HScroll />
                <Explore><svg width="12" height="15" viewBox="0 0 12 15"><path d="M1 0h10a1 1 0 0 1 1 1v11a1 1 0 0 1-1 1H8l-2 2-2-2H1a1 1 0 0 1-1-1V1a1 1 0 0 1 1-1z" fill="#5f6368" /><path d="M6 3l1.200 2.800L10 7 7.200 8.200 6 11 4.800 8.200 2 7l2.800-1.200z" fill="#fff" /></svg></Explore>
              </DocBody>
            </DocMain>
            <SidePanel>
              <SideApp><CalIco n="31" /></SideApp>
              <SideApp><KeepIco /></SideApp>
              <SideApp><TasksIco /></SideApp>
              <SideApp><ContactsIco /></SideApp>
              <SideApp><MapsIco /></SideApp>
              <SideRule />
              <Plus size={16} color="#222" />
              <SideChevron><ChevronRight size={13} /></SideChevron>
            </SidePanel>
          </DocBelow>
        </Win>
      </Windows>

      <Taskbar>
        <Weather>
          <WeatherIco />
          <WeatherText>30°C<WeatherSub>Cerah</WeatherSub></WeatherText>
        </Weather>
        <TaskIcon><Win11 /></TaskIcon>
        <TaskIcon><SearchIco /></TaskIcon>
        <TaskIcon $dot="#8a8a8a"><SpotifyIco /></TaskIcon>
        <TaskIcon $dot="#8a8a8a"><FolderIco /></TaskIcon>
        <TaskIcon $dot="#8a8a8a"><PsIco /></TaskIcon>
        <TaskIcon $bg="#2b2b2b" $dot="#b0b0b0" $wide><ChromeIco /></TaskIcon>
        <TaskIcon $bg="#3a2424" $dot="#f39aa0"><StickyIco /></TaskIcon>
        <TaskIcon $dot="#8a8a8a"><EdgeIco /></TaskIcon>
        <TaskIcon $dot="#8a8a8a"><RarIco /></TaskIcon>
        <TaskIcon $dot="#8a8a8a"><AiIco /></TaskIcon>
        <TaskIcon $dot="#8a8a8a"><WaIco /><WaBadge>99</WaBadge></TaskIcon>
        <Tray>
          <TraySlot $w={36}><ChevronUp size={16} strokeWidth={1.3} /></TraySlot>
          <TraySlot $w={36}><Keyboard size={17} strokeWidth={1.4} /></TraySlot>
          <TraySlot $w={36}><PenTool size={15} strokeWidth={1.4} /></TraySlot>
          <TraySlot $w={40}>IND</TraySlot>
          <TraySlot $w={36}><Wifi size={16} strokeWidth={1.5} /></TraySlot>
          <TraySlot $w={14}><VolumeX size={15} strokeWidth={1.4} /></TraySlot>
          <TraySlot $w={32}><BatteryMedium size={17} strokeWidth={1.5} /></TraySlot>
          <Clock2>09.38<br />04/10/2022</Clock2>
          <TraySlot $w={46}><Moon size={16} strokeWidth={1.4} /></TraySlot>
        </Tray>
      </Taskbar>
    </Desktop>
  );
}
